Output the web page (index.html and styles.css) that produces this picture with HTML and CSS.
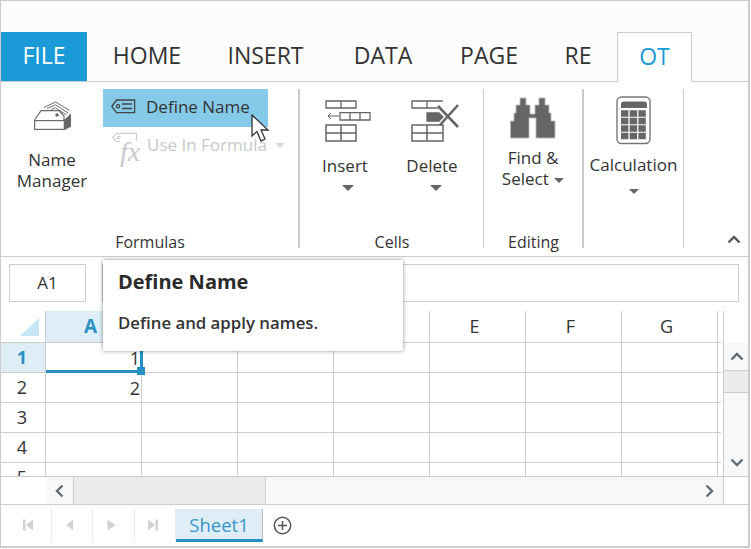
FILE: index.html
```html
<!DOCTYPE html>
<html lang="en">
<head>
  <meta charset="UTF-8">
  <title>Spreadsheet</title>
  <link rel="stylesheet" href="styles.css">
</head>
<body>
  <div class="sheet-app">
    <div class="tabs">
      <span class="tab tab-file">FILE</span>
      <span class="tab tab-home">HOME</span>
      <span class="tab tab-insert">INSERT</span>
      <span class="tab tab-data">DATA</span>
      <span class="tab tab-page">PAGE</span>
      <span class="tab tab-re">RE</span>
      <span class="tab tab-active">OT</span>
    </div>

    <div class="ribbon">
      <div class="group group-formulas">
        <div class="group-body">
          <div class="big-btn name-manager">
            <svg width="37" height="30" viewBox="33 100 37 30" fill="none" stroke="#6a6a6a" stroke-width="1.2">
              <rect x="33.6" y="120.6" width="29.8" height="8.8"/>
              <path d="M33.6 120 L40 110.6 H58 L63 116 V120"/>
              <path d="M63.5 120.5 L69.4 115 V126.5 L63.5 129.4 Z" fill="#666"/>
              <circle cx="56" cy="115" r="1.7" fill="#666" stroke="none"/>
              <path d="M43 107.5 L54.5 102 L68.5 110.5 M46 108.5 L54.5 104.8 L67 113 M50 109.5 L54.5 107.8 L65.5 115" stroke-width="1"/>
            </svg>
            <span>Name<br>Manager</span>
          </div>
          <div class="small-col">
            <div class="small-btn is-hover">
              <svg width="25" height="15" viewBox="111 100 25 15" fill="none" stroke="#444" stroke-width="1.3">
                <path d="M111.8 107.5 L116.5 101 H134.6 V113.6 H116.5 Z"/>
                <circle cx="118" cy="107.3" r="1.6"/>
                <path d="M122 105 H132 M122 109.5 H132"/>
              </svg>
              <span>Define Name</span>
            </div>
            <div class="small-btn is-disabled">
              <span class="fx-icon">
                <svg width="26" height="15" viewBox="112 132 26 15" fill="none" stroke="#cfcfcf" stroke-width="1.2">
                  <path d="M120 141.5 H116.5 L112.8 137.5 L116.5 133.4 H136.5 V141"/>
                  <circle cx="118.5" cy="137.5" r="1.5"/>
                </svg>
                <span class="fx-text">fx</span>
              </span>
              <span>Use In Formula</span>
              <i class="caret caret-light"></i>
            </div>
          </div>
        </div>
        <div class="group-label">Formulas</div>
      </div>

      <div class="group group-cells">
        <div class="group-body">
          <div class="big-btn btn-insert">
            <svg width="46" height="42" viewBox="325 100 46 42" fill="none" stroke="#666" stroke-width="1.3">
              <path d="M326 101 H356 V108 H326 Z M341 101 V108"/>
              <path d="M328 116 H339 M331 113 L328 116 L331 119" stroke-width="1"/>
              <path d="M340 112.6 H370 V120 H340 Z M350 112.6 V120 M360 112.6 V120"/>
              <path d="M326 125 H356 V141 H326 Z M341 125 V141 M326 133 H356" stroke-width="1.5"/>
            </svg>
            <span class="big-text">Insert</span>
            <i class="caret caret-big"></i>
          </div>
          <div class="big-btn btn-delete">
            <svg width="50" height="42" viewBox="411 100 50 42" fill="none" stroke="#666" stroke-width="1.3">
              <path d="M443 101 H412 V108 H438 M427 101 V108"/>
              <path d="M427 113 H439 L443 117 L439 121 H427 Z" fill="#666"/>
              <path d="M438 106 L458 127 M458 105 L440 125" stroke-width="2.6"/>
              <path d="M412 125 H443 V141 H412 Z M427 125 V141 M412 133 H443" stroke-width="1.5"/>
            </svg>
            <span class="big-text">Delete</span>
            <i class="caret caret-big"></i>
          </div>
        </div>
        <div class="group-label">Cells</div>
      </div>

      <div class="group group-editing">
        <div class="group-body">
          <div class="big-btn btn-find">
            <svg width="46" height="43" viewBox="512 97 46 43">
              <path fill="#666" stroke="#b9b9b9" stroke-width="0.9" d="M522 98 H528 V105 H532 V114 H537 V105 H541 V98 H547 V105 H551 V113 H553 V121 H557 V138 H538 V118 H531 V138 H512.5 V121 H516 V113 H518 V105 H522 Z"/>
            </svg>
            <span class="find-text">Find &amp;<br>Select <i class="caret caret-inline"></i></span>
          </div>
        </div>
        <div class="group-label">Editing</div>
      </div>

      <div class="group group-calc">
        <div class="group-body">
          <div class="big-btn btn-calc">
            <svg width="36" height="49" viewBox="615 96 36 49" fill="none">
              <rect x="616" y="97" width="33" height="46.5" rx="4.5" stroke="#777" stroke-width="1.4"/>
              <path d="M620 108 V104 Q620 101.5 623 101.5 H643 Q646 101.5 646 104 V108 Z" fill="#666"/>
              <path stroke="#666" stroke-width="6.4" stroke-dasharray="7.4 1.3" d="M620 113.5 H646 M620 121 H646 M620 128.5 H646 M620 136 H646"/>
            </svg>
            <span class="calc-text">Calculation</span>
            <i class="caret caret-calc"></i>
          </div>
        </div>
      </div>

      <div class="ribbon-end">
        <svg class="collapse" width="14" height="9" viewBox="0 0 14 9" fill="none" stroke="#555" stroke-width="2.4"><path d="M1.5 7.5 L7 2 L12.5 7.5"/></svg>
      </div>
    </div>

    <div class="formula-bar">
      <div class="name-box">A1</div>
      <div class="formula-input"></div>
    </div>

    <div class="grid-area">
      <div class="grid-wrap">
        <div class="grid">
          <div class="hcell corner"><i class="corner-mark"></i></div>
          <div class="hcell is-sel">A</div>
          <div class="hcell"></div>
          <div class="hcell"></div>
          <div class="hcell"></div>
          <div class="hcell">E</div>
          <div class="hcell">F</div>
          <div class="hcell">G</div>
          <div class="hcell hcell-end"></div>

          <div class="rcell is-sel">1</div>
          <div class="cell cell-active">1<i class="fill-handle"></i></div>
          <div class="cell"></div><div class="cell"></div><div class="cell"></div><div class="cell"></div><div class="cell"></div><div class="cell"></div><div class="cell cell-end"></div>

          <div class="rcell">2</div>
          <div class="cell">2</div>
          <div class="cell"></div><div class="cell"></div><div class="cell"></div><div class="cell"></div><div class="cell"></div><div class="cell"></div><div class="cell cell-end"></div>

          <div class="rcell">3</div>
          <div class="cell"></div><div class="cell"></div><div class="cell"></div><div class="cell"></div><div class="cell"></div><div class="cell"></div><div class="cell"></div><div class="cell cell-end"></div>

          <div class="rcell">4</div>
          <div class="cell"></div><div class="cell"></div><div class="cell"></div><div class="cell"></div><div class="cell"></div><div class="cell"></div><div class="cell"></div><div class="cell cell-end"></div>

          <div class="rcell">5</div>
          <div class="cell"></div><div class="cell"></div><div class="cell"></div><div class="cell"></div><div class="cell"></div><div class="cell"></div><div class="cell"></div><div class="cell cell-end"></div>
        </div>
        <div class="vscroll">
          <div class="vscroll-head"></div>
          <div class="vscroll-btn">
            <svg width="14" height="9" viewBox="0 0 14 9" fill="none" stroke="#5f6b75" stroke-width="2.4"><path d="M1.5 7.5 L7 2 L12.5 7.5"/></svg>
          </div>
          <div class="vscroll-thumb"></div>
          <div class="vscroll-track"></div>
          <div class="vscroll-btn">
            <svg width="14" height="9" viewBox="0 0 14 9" fill="none" stroke="#5f6b75" stroke-width="2.4"><path d="M1.5 1.5 L7 7 L12.5 1.5"/></svg>
          </div>
        </div>
      </div>
      <div class="hscroll">
        <div class="hscroll-spacer"></div>
        <div class="hscroll-main">
          <div class="hscroll-btn">
            <svg width="9" height="14" viewBox="0 0 9 14" fill="none" stroke="#5f6b75" stroke-width="2.4"><path d="M7.5 1.5 L2 7 L7.5 12.5"/></svg>
          </div>
          <div class="hscroll-thumb"></div>
          <div class="hscroll-track"></div>
          <div class="hscroll-btn">
            <svg width="9" height="14" viewBox="0 0 9 14" fill="none" stroke="#5f6b75" stroke-width="2.4"><path d="M1.5 1.5 L7 7 L1.5 12.5"/></svg>
          </div>
        </div>
        <div class="hscroll-corner"></div>
      </div>
    </div>

    <div class="sheet-bar">
      <div class="nav-btn">
        <svg width="12" height="12" viewBox="0 0 12 12" fill="#d2d2d2"><rect x="1" y="0.5" width="2.5" height="11"/><path d="M11 0.5 V11.5 L4 6 Z"/></svg>
      </div>
      <div class="nav-btn">
        <svg width="8" height="12" viewBox="0 0 8 12" fill="#d2d2d2"><path d="M7 0.5 V11.5 L0.5 6 Z"/></svg>
      </div>
      <div class="nav-btn">
        <svg width="9" height="12" viewBox="0 0 9 12" fill="#d2d2d2"><path d="M0.5 0.5 V11.5 L8.5 6 Z"/></svg>
      </div>
      <div class="nav-btn">
        <svg width="12" height="12" viewBox="0 0 12 12" fill="#d2d2d2"><path d="M1 0.5 V11.5 L8 6 Z"/><rect x="8.5" y="0.5" width="2.5" height="11"/></svg>
      </div>
      <div class="sheet-tab">Sheet1</div>
      <svg class="add-sheet" width="19" height="19" viewBox="0 0 19 19" fill="none" stroke="#555" stroke-width="1.5">
        <circle cx="9.5" cy="9.5" r="8.2"/>
        <path d="M9.5 5 V14 M5 9.5 H14"/>
      </svg>
    </div>

    <div class="tooltip">
      <div class="tooltip-title">Define Name</div>
      <div class="tooltip-text">Define and apply names.</div>
    </div>

    <svg class="cursor" width="21" height="29" viewBox="0 0 21 29">
      <path d="M1 1 V22 L6 17.5 L10 27 L14 25 L10 16 H17 Z" fill="#fff" stroke="#333" stroke-width="1.3"/>
    </svg>
  </div>
</body>
</html>
```

FILE: styles.css
```css
* {
  box-sizing: border-box;
}
body {
  margin: 0;
  background-color: #fff;
  font-family: "Open Sans", sans-serif;
  color: #333;
}
.sheet-app {
  position: relative;
  width: 750px;
  height: 548px;
  border: 1px solid #ccc;
  border-right-width: 2px;
  border-bottom-width: 2px;
  overflow: hidden;
  display: flex;
  flex-direction: column;
}

/* tabs */
.tabs {
  display: flex;
  height: 81px;
  padding-top: 31px;
  background-color: #fcfcfc;
  border-bottom: 1px solid #ccc;
  font-size: 23px;
  color: #333;
}
.tab {
  display: flex;
  align-items: center;
  justify-content: center;
  height: 49px;
  padding-bottom: 4px;
}
.tab-file {
  width: 86px;
  background-color: #1a9ad6;
  color: #fff;
}
.tab-home { width: 120px; }
.tab-insert { width: 117px; }
.tab-data { width: 118px; }
.tab-page { width: 94px; }
.tab-re { width: 81px; padding-left: 3px; }
.tab-active {
  width: 75px;
  height: 50px;
  background-color: #fff;
  border: 1px solid #ccc;
  border-bottom: none;
  color: #1a9ad6;
}

/* ribbon */
.ribbon {
  display: flex;
  height: 175px;
  padding-top: 7px;
  border-bottom: 1px solid #ccc;
  font-size: 17px;
}
.group {
  display: flex;
  flex-direction: column;
  height: 159px;
  border-right: 1px solid #ccc;
}
.group-formulas { width: 299px; border-right-width: 2px; }
.group-cells { width: 184px; }
.group-editing { width: 100px; border-right-width: 2px; }
.group-calc { width: 100px; }
.group-body {
  display: flex;
  flex: 1;
}
.group-label {
  height: 15px;
  line-height: 18px;
  font-size: 16px;
  text-align: center;
  padding-left: 1px;
}
.ribbon-end {
  flex: 1;
  display: flex;
  justify-content: flex-end;
  align-items: flex-end;
  padding: 0 7px 12px 0;
}
.big-btn {
  display: flex;
  flex-direction: column;
  align-items: center;
  text-align: center;
  line-height: 21px;
}
.name-manager {
  width: 102px;
  padding-top: 11px;
}
.name-manager span {
  margin-top: 19px;
  display: block;
}
.small-col {
  display: flex;
  flex-direction: column;
}
.small-btn {
  display: flex;
  align-items: center;
  width: 165px;
  height: 38px;
  padding-left: 8px;
  padding-bottom: 4px;
  white-space: nowrap;
}
.is-hover {
  background-color: #86caea;
}
.is-hover span {
  margin-left: 10px;
}
.is-disabled {
  color: #c9c9c9;
  padding-left: 9px;
}
.is-disabled > span:not(.fx-icon) {
  margin-left: 9px;
}
.fx-icon {
  position: relative;
  display: block;
  width: 26px;
  height: 32px;
  margin-top: 7px;
}
.fx-icon svg {
  display: block;
}
.fx-text {
  position: absolute;
  left: 8px;
  top: 7px;
  font-family: "Liberation Serif", serif;
  font-style: italic;
  font-size: 28px;
  line-height: 26px;
  color: #c9c9c9;
}
.caret {
  display: block;
  width: 0;
  height: 0;
  border-left: 6px solid transparent;
  border-right: 6px solid transparent;
  border-top: 6px solid #666;
}
.caret-light {
  flex: none;
  margin-left: 8px;
  margin-top: 2px;
  border-top-color: #d9d9d9;
  border-left-width: 5px;
  border-right-width: 5px;
  border-top-width: 5px;
}
.caret-big {
  margin-top: 9px;
}
.btn-insert {
  width: 90px;
  padding-top: 11px;
}
.btn-delete {
  width: 84px;
  padding-top: 11px;
}
.btn-insert .big-text,
.btn-delete .big-text {
  margin-top: 13px;
}
.btn-insert svg,
.btn-insert .caret { margin-left: 6px; }
.btn-delete svg,
.btn-delete .caret { margin-left: 8px; }
.btn-find {
  width: 99px;
  padding-top: 8px;
}
.find-text {
  margin-top: 7px;
}
.caret-inline {
  display: inline-block;
  vertical-align: middle;
  border-left-width: 5.5px;
  border-right-width: 5.5px;
  border-top-width: 5px;
  margin-left: 1px;
}
.btn-calc {
  width: 99px;
  padding-top: 7px;
}
.calc-text {
  margin-top: 9px;
}
.caret-calc {
  margin-top: 14px;
  border-left-width: 5px;
  border-right-width: 5px;
  border-top-width: 5px;
}

/* formula bar */
.formula-bar {
  display: flex;
  gap: 16px;
  height: 54px;
  padding: 7px 9px 9px 8px;
}
.name-box {
  width: 77px;
  height: 38px;
  padding-bottom: 2px;
  border: 1px solid #ccc;
  display: flex;
  align-items: center;
  justify-content: center;
  font-size: 17px;
}
.formula-input {
  flex: 1;
  height: 38px;
  border: 1px solid #ccc;
}

/* grid */
.grid-area {
  display: flex;
  flex-direction: column;
  height: 194px;
  border-bottom: 1px solid #ccc;
}
.grid-wrap {
  display: flex;
  height: 166px;
  border-bottom: 1px solid #ccc;
}
.grid {
  flex: none;
  width: 720px;
  height: 165px;
  overflow: hidden;
  display: grid;
  grid-template-columns: 45px repeat(7, 96px) 3px;
  grid-template-rows: 32px repeat(5, 30px);
  font-size: 18px;
  color: #333;
}
.hcell {
  display: flex;
  align-items: center;
  justify-content: center;
  border-right: 1px solid #ccc;
  border-bottom: 1px solid #ccc;
  font-size: 18px;
  padding: 0 6px 2px 0;
}
.hcell.is-sel {
  background-color: #dfeef6;
  color: #2b90c4;
  font-weight: 700;
  font-size: 19px;
}
.hcell-end {
  border-right: none;
  padding: 0;
}
.corner {
  position: relative;
}
.corner-mark {
  position: absolute;
  left: 19px;
  top: 7px;
  width: 0;
  height: 0;
  border-left: 19px solid transparent;
  border-bottom: 18px solid #c6e6f6;
}
.rcell {
  display: flex;
  align-items: center;
  justify-content: center;
  padding: 0 2px 2px 0;
  border-right: 1px solid #ccc;
  border-bottom: 1px solid #ccc;
}
.rcell.is-sel {
  background-color: #dfeef6;
  color: #2b90c4;
  font-weight: 700;
}
.cell {
  position: relative;
  display: flex;
  align-items: center;
  justify-content: flex-end;
  padding: 1px 1px 0 0;
  border-right: 1px solid #ccc;
  border-bottom: 1px solid #ccc;
}
.cell-end {
  border-right: none;
}
.cell-active::after {
  content: "";
  position: absolute;
  left: 0;
  right: 0;
  bottom: -1px;
  height: 3px;
  background-color: #2490c6;
}
.cell-active::before {
  content: "";
  position: absolute;
  right: -2px;
  top: 0;
  bottom: 0;
  width: 3px;
  background-color: #2490c6;
}
.fill-handle {
  position: absolute;
  right: -4px;
  bottom: -3px;
  width: 8px;
  height: 8px;
  background-color: #2490c6;
  z-index: 1;
}

/* scrollbars */
.vscroll {
  flex: 1;
  display: flex;
  flex-direction: column;
  margin-left: 2px;
  background-color: #f8f8f8;
  border-left: 1px solid #ccc;
}
.vscroll-head {
  height: 32px;
  background-color: #fff;
}
.vscroll-btn {
  display: flex;
  align-items: center;
  justify-content: center;
  height: 27px;
  padding-left: 2px;
}
.vscroll-thumb {
  height: 23px;
  background-color: #ebebeb;
  border-top: 1px solid #ccc;
  border-bottom: 1px solid #ccc;
}
.vscroll-track {
  flex: 1;
}
.hscroll {
  display: flex;
  height: 27px;
}
.hscroll-spacer {
  width: 45px;
}
.hscroll-main {
  display: flex;
  width: 677px;
  background-color: #f8f8f8;
}
.hscroll-btn {
  display: flex;
  align-items: center;
  justify-content: center;
  width: 27px;
}
.hscroll-thumb {
  width: 193px;
  background-color: #ebebeb;
  border-left: 1px solid #ccc;
  border-right: 1px solid #ccc;
}
.hscroll-track {
  flex: 1;
}
.hscroll-corner {
  flex: 1;
  border-left: 1px solid #ccc;
}

/* sheet tabs */
.sheet-bar {
  display: flex;
  align-items: flex-start;
  flex: 1;
  padding: 2px 0 0 9px;
}
.nav-btn {
  display: flex;
  align-items: center;
  justify-content: center;
  width: 41.5px;
  height: 35px;
  padding-right: 4px;
  border-right: 1px solid #ececec;
}
.sheet-tab {
  display: flex;
  align-items: center;
  justify-content: center;
  width: 87px;
  height: 33px;
  margin-top: 2px;
  background-color: #dfeef6;
  border-right: 1px solid #bbb;
  border-bottom: 3px solid #2490c6;
  color: #3a96c8;
  font-size: 18.5px;
}
.add-sheet {
  margin: 9px 0 0 10px;
}

/* overlays */
.tooltip {
  position: absolute;
  left: 102px;
  top: 259px;
  width: 300px;
  height: 91px;
  padding: 8px 15px;
  background-color: #fff;
  box-shadow: 0 0 4px rgba(0, 0, 0, 0.45);
}
.tooltip-title {
  font-size: 20px;
  font-weight: 700;
  color: #2b2b2b;
}
.tooltip-text {
  margin-top: 16px;
  font-size: 16.8px;
  font-weight: 600;
  color: #333;
}
.cursor {
  position: absolute;
  left: 250px;
  top: 113px;
}
```
